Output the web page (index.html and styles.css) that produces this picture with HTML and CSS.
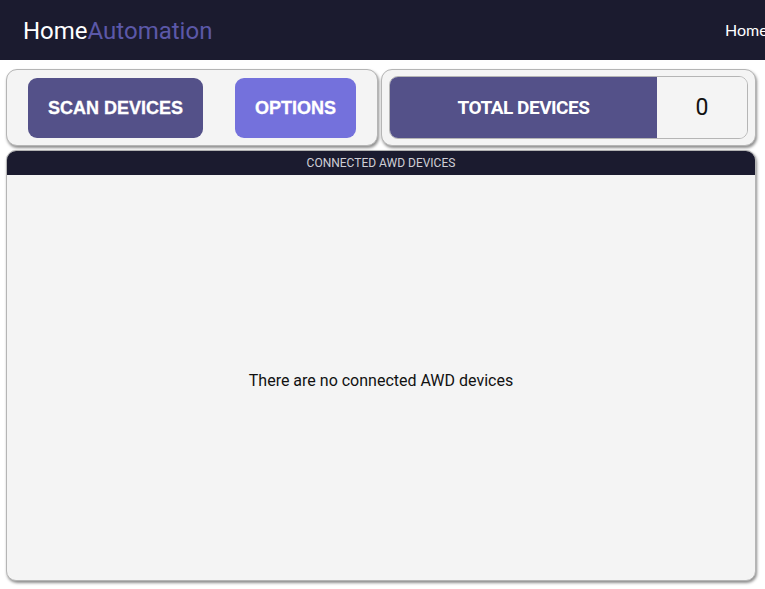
FILE: index.html
```html
<!DOCTYPE html>
<html>
<head>
<meta charset="utf-8">
<link rel="stylesheet" href="styles.css">
</head>
<body>
<header class="topbar">
  <div class="logo"><span class="logo-a">Home</span><span class="logo-b">Automation</span></div>
  <nav class="nav"><a class="nav-link">Home</a></nav>
</header>
<div class="row">
  <div class="card card-left">
    <button class="btn btn-scan">SCAN DEVICES</button>
    <button class="btn btn-options">OPTIONS</button>
  </div>
  <div class="card card-right">
    <div class="total">
      <div class="total-label">TOTAL DEVICES</div>
      <div class="total-value">0</div>
    </div>
  </div>
</div>
<section class="panel">
  <div class="panel-head">CONNECTED AWD DEVICES</div>
  <div class="panel-body">There are no connected AWD devices</div>
</section>
</body>
</html>
```
FILE: styles.css
```css
html, body { margin: 0; padding: 0; }
body { background: #fff; font-family: Roboto, "Liberation Sans", sans-serif; width: 765px; height: 589px; overflow: hidden; }
.topbar { height: 60px; background: #1b1b2f; display: flex; align-items: center; justify-content: space-between; padding-left: 23px; box-sizing: border-box; overflow: hidden; }
.logo { font-size: 24px; line-height: 1; margin-top: 1px; }
.logo-a { color: #fff; }
.logo-b { color: #5b58a8; }
.nav { width: 40px; overflow: visible; white-space: nowrap; }
.nav-link { color: #fff; font-family: Lato, sans-serif; font-size: 16px; }
.row { display: flex; gap: 3px; margin: 9px 0 0 6px; }
.card { box-sizing: border-box; height: 77px; background: #f4f4f4; border: 1px solid #b5b5b5; border-radius: 11px; box-shadow: 1px 2px 3px rgba(0,0,0,0.45); }
.card-left { width: 372px; display: flex; gap: 32px; padding: 8px 0 0 21px; }
.btn { height: 60px; border: none; border-radius: 9px; color: #fff; font-family: "Liberation Sans", Arial, sans-serif; font-weight: bold; font-size: 18px; padding: 0; cursor: pointer; -webkit-text-stroke: 0.3px #fff; }
.btn-scan { width: 175px; background: #545189; }
.btn-options { width: 121px; background: #7471dc; }
.card-right { width: 375px; padding: 6px 7px; }
.total { display: flex; height: 63px; border-radius: 9px; overflow: hidden; border: 1px solid #b5b5b5; box-sizing: border-box; }
.total-label { width: 267px; background: #545189; color: #fff; font-weight: bold; font-size: 19px; letter-spacing: -0.5px; display: flex; align-items: center; justify-content: center; }
.total-value { flex: 1; background: #f4f4f4; color: #111; font-size: 23px; display: flex; align-items: center; justify-content: center; }
.panel { box-sizing: border-box; width: 750px; height: 431px; margin: 4px 0 0 6px; background: #f4f4f4; border: 1px solid #b5b5b5; border-radius: 10px; box-shadow: 1px 2px 3px rgba(0,0,0,0.45); overflow: hidden; display: flex; flex-direction: column; }
.panel-head { height: 24px; background: #1b1b2f; color: #cfcfd6; font-size: 12px; display: flex; align-items: center; justify-content: center; }
.panel-body { flex: 1; display: flex; align-items: center; justify-content: center; font-size: 16px; color: #111; padding-top: 5px; }
```
